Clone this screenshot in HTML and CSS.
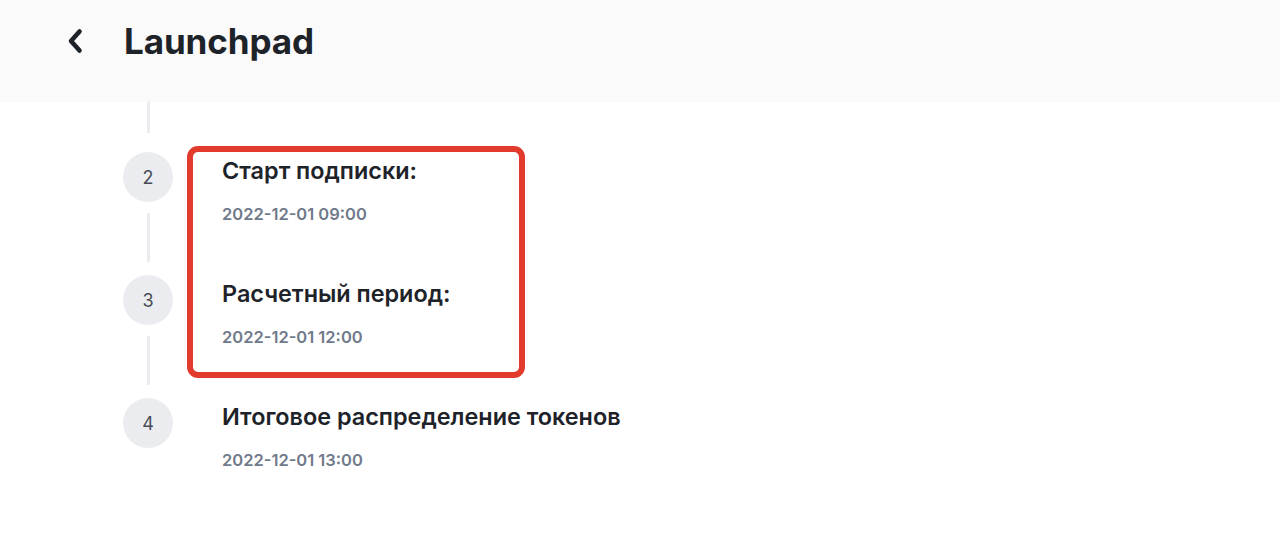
FILE: index.html
```html
<!DOCTYPE html>
<html lang="ru">
<head>
<meta charset="utf-8">
<title>Launchpad</title>
<link rel="stylesheet" href="styles.css">
</head>
<body>
<header class="header">
  <button class="back" aria-label="Назад">
    <svg width="18" height="26" viewBox="0 0 18 26"><path d="M13.5 3.5 L5 13 L13.5 22.5" fill="none" stroke="#1e2329" stroke-width="4.6" stroke-linecap="round" stroke-linejoin="round"/></svg>
  </button>
  <h1 class="title">Launchpad</h1>
</header>
<main class="content">
  <div class="lead-line"></div>
  <ol class="steps">
    <li class="step">
      <div class="rail"><span class="num">2</span><span class="line"></span></div>
      <div class="info"><div class="name">Старт подписки:</div><div class="date">2022-12-01 09:00</div></div>
    </li>
    <li class="step">
      <div class="rail"><span class="num">3</span><span class="line"></span></div>
      <div class="info"><div class="name">Расчетный период:</div><div class="date">2022-12-01 12:00</div></div>
    </li>
    <li class="step">
      <div class="rail"><span class="num">4</span></div>
      <div class="info"><div class="name">Итоговое распределение токенов</div><div class="date">2022-12-01 13:00</div></div>
    </li>
  </ol>
  <div class="highlight"></div>
</main>
</body>
</html>
```
FILE: styles.css
```css
* { box-sizing: border-box; }
html, body { margin: 0; padding: 0; background: #fff; }
body { font-family: Inter, "Noto Sans", sans-serif; color: #1e2329; width: 1280px; height: 548px; overflow: hidden; }
.header { height: 102px; background: #fafafa; display: flex; align-items: center; padding-left: 64px; padding-bottom: 20px; }
.back { border: 0; background: none; padding: 0; width: 22px; height: 26px; display: flex; align-items: center; justify-content: center; margin-right: 38px; }
.title { margin: 0; font-size: 35px; font-weight: 700; letter-spacing: -0.1px; line-height: 1; }
.content { position: relative; padding-left: 123px; }
.lead-line { width: 3px; height: 31px; background: #eaecef; margin-left: 24px; margin-bottom: 19px; }
.steps { list-style: none; margin: 0; padding: 0; }
.step { display: flex; }
.rail { width: 50px; display: flex; flex-direction: column; align-items: center; }
.num { width: 50px; height: 50px; border-radius: 50%; background: #eaecef; color: #474d57; font-size: 18px; display: flex; align-items: center; justify-content: center; }
.line { width: 3px; height: 49px; margin: 11px 0 13px; background: #eaecef; }
.info { margin-left: 49px; padding-top: 4px; }
.name { font-size: 23.4px; font-weight: 600; line-height: 30px; }
.date { margin-top: 18px; font-size: 16.5px; font-weight: 600; color: #707a8a; line-height: 20px; }
.highlight { position: absolute; left: 187px; top: 44px; width: 338px; height: 232px; border: 6px solid #e23b2e; border-radius: 11px; pointer-events: none; }
```
